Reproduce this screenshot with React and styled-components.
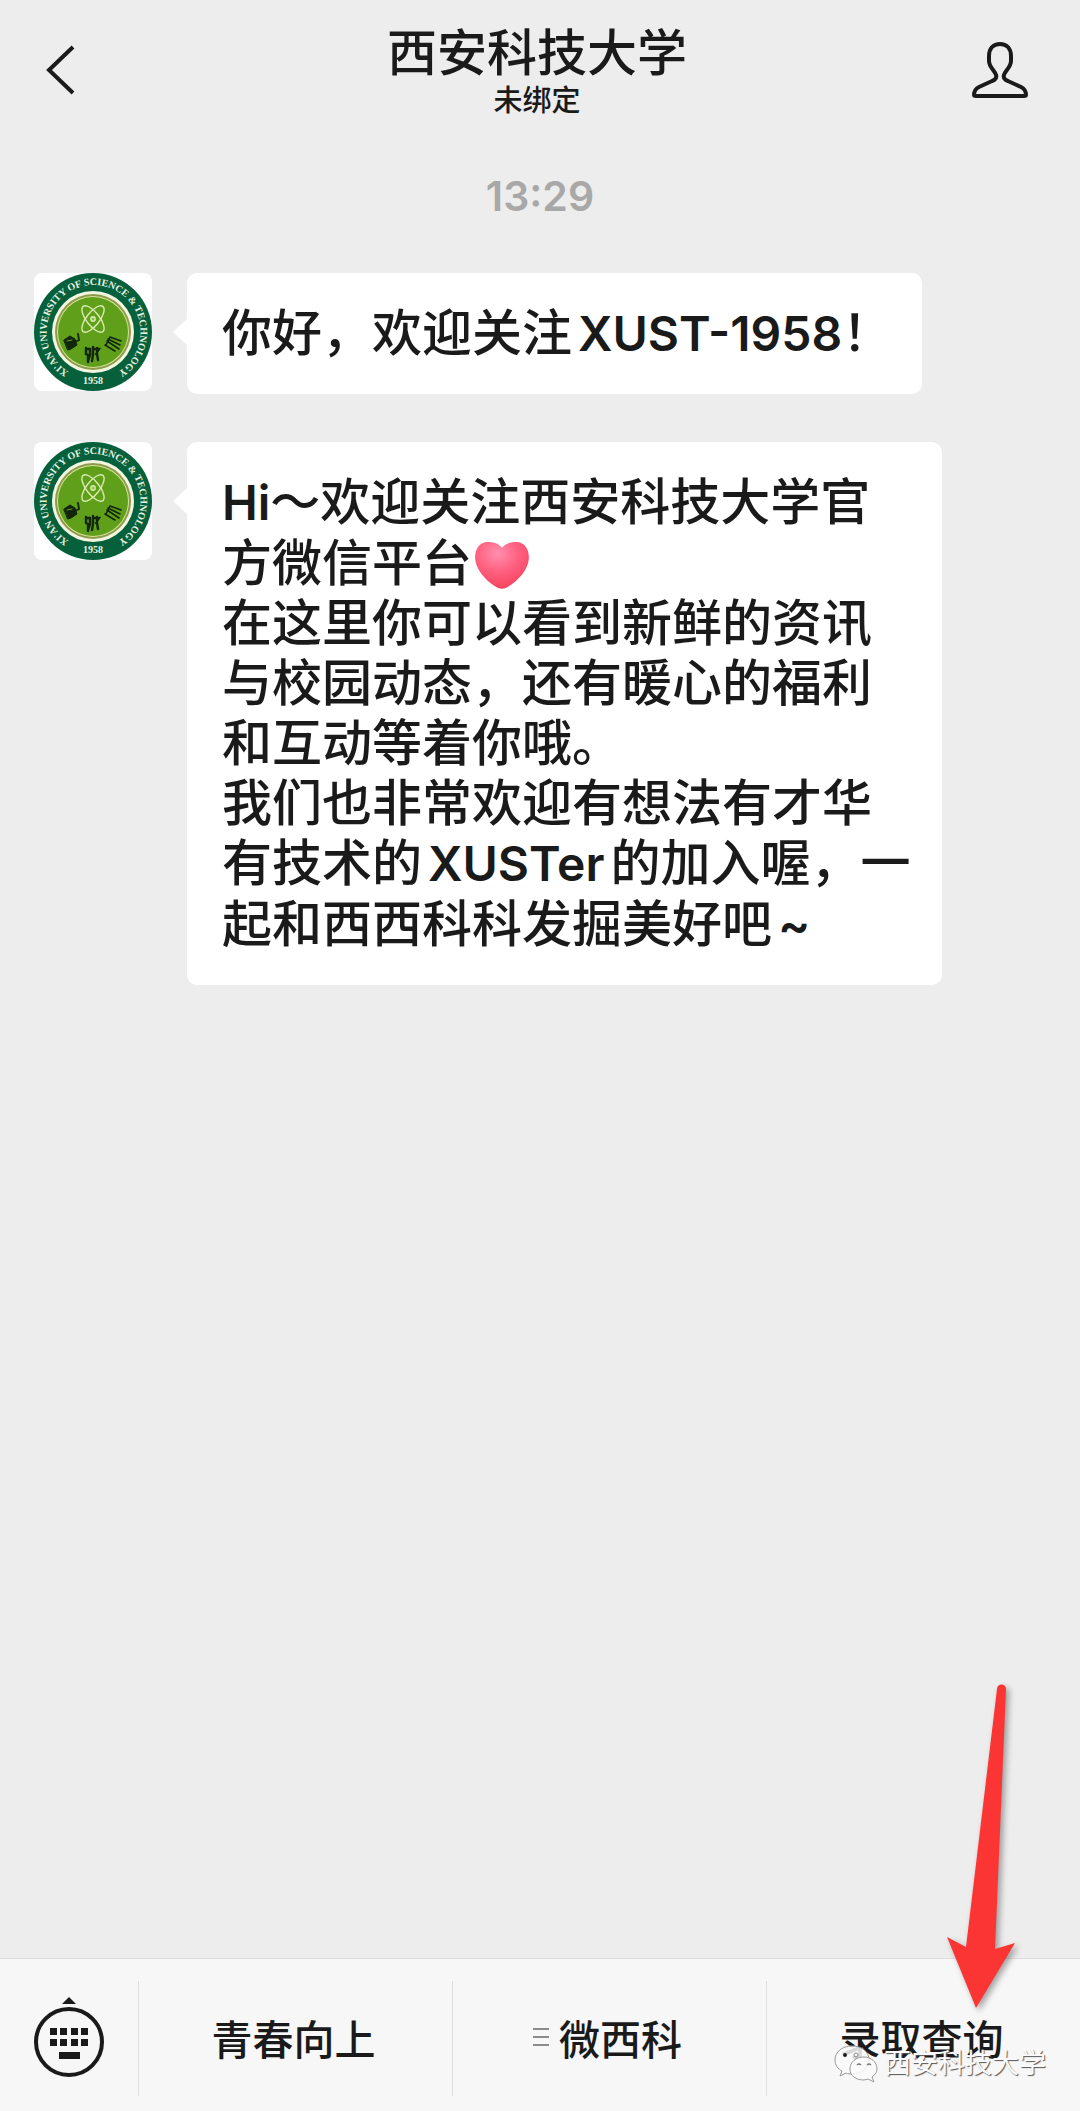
import React from "react";
import styled, { createGlobalStyle } from "styled-components";

//------------------------------------------------------------//

const MENU = [
  { label: "青春向上" },
  { label: "微西科", hasSub: true },
  { label: "录取查询", isTarget: true },
];

const Seal = () => (
  <svg viewBox="-59 -59 118 118" role="img" aria-label="西安科技大学校徽">
    <defs>
      <path id="seal-ring" d="M0 47 A47 47 0 1 1 1 47" />
    </defs>
    <circle r="59" fill="#06603c" />
    <circle r="41" fill="#f3f6df" />
    <circle r="38" fill="#8d9a4c" />
    <circle r="36" fill="#d5e29a" />
    <circle r="35" fill="#5f9f19" />
    <SEALTEXT fontSize="10" textAnchor="middle">
      <textPath href="#seal-ring" startOffset="50%">
        XI'AN UNIVERSITY OF SCIENCE &amp; TECHNOLOGY
      </textPath>
    </SEALTEXT>
    <SEALTEXT fontSize="10" textAnchor="middle" y="52">
      1958
    </SEALTEXT>
    <g fill="none" stroke="#dcebb4" strokeWidth="1.4">
      <ellipse cy="-13" rx="16" ry="6.5" transform="rotate(52 0 -13)" />
      <ellipse cy="-13" rx="16" ry="6.5" transform="rotate(-52 0 -13)" />
      <circle cy="-13" r="2.2" fill="#8fbf4a" />
    </g>
    <g fill="#12260c" stroke="#12260c" strokeLinecap="round">
      <path d="M-29 8l6-4 5 3 2 6-6 4-3 1z" strokeWidth="1" />
      <path d="M-18 10l4-2-1-6" fill="none" strokeWidth="1.8" />
      <path d="M-26 9l5-1" stroke="#5f9f19" strokeWidth="1" />
      <path
        d="M-7 16v6l2 1v7M-3 17v6l-2 6M0 15v8l-1 6M4 16v6l1 6M-7 17h4M0 17h6l-3 5"
        fill="none"
        strokeWidth="2.4"
      />
      <path
        d="M13 13l4-8M14 9l12 8M15 7l12 6M17 5l11 4M12 13l10 6"
        fill="none"
        strokeWidth="1.6"
      />
    </g>
  </svg>
);

const Heart = () => (
  <HEART viewBox="0 0 56 50" role="img" aria-label="爱心">
    <defs>
      <radialGradient id="heart-fill" cx="0.42" cy="0.25" r="0.8">
        <stop offset="0" stopColor="#ff8fae" />
        <stop offset="0.5" stopColor="#ff5f7e" />
        <stop offset="1" stopColor="#f2405c" />
      </radialGradient>
    </defs>
    <path
      d="M28 7C24 2 18 1 13 1 5 1 0 8 0 17c0 14 14 27 24 32 3 1 5 1 8 0 10-5 24-18 24-32C56 8 51 1 43 1 38 1 32 2 28 7z"
      fill="url(#heart-fill)"
    />
  </HEART>
);

const Message = ({ children }) => (
  <MESSAGE>
    <AVATAR>
      <Seal />
    </AVATAR>
    <BUBBLE>{children}</BUBBLE>
  </MESSAGE>
);

const KeyboardIcon = () => (
  <svg width="70" height="80" viewBox="0 0 70 80" aria-hidden="true">
    <path d="M35 0l7 7H28z" fill="#1a1a1a" />
    <circle
      cx="35"
      cy="45"
      r="33"
      fill="none"
      stroke="#1a1a1a"
      strokeWidth="4"
    />
    <g fill="#1a1a1a">
      {[31, 42].map((y) =>
        [16, 26, 37, 47].map((x) => (
          <rect key={`${x}-${y}`} x={x} y={y} width="7" height="7" />
        ))
      )}
      <rect x="25" y="55" width="21" height="7" />
    </g>
  </svg>
);

const Arrow = () => (
  <ARROW viewBox="0 0 76 330" aria-hidden="true">
    <path
      d="M53 8a4 4 0 0 1 9 0L51 268l20-6-39 65L3 256l19 10z"
      fill="#fa3534"
    />
  </ARROW>
);

const Watermark = () => (
  <WATERMARK>
    <svg width="44" height="38" viewBox="0 0 44 38" aria-hidden="true">
      <g fill="#fafafa" fillOpacity="0.85" stroke="#9a9a9a">
        <path d="M18 1C8 1 1 7 1 15c0 5 3 9 7 11l-2 5 6-3c2 1 4 1 6 1 9 0 17-6 17-14S28 1 18 1z" />
        <path d="M30 12c-8 0-14 5-14 12s6 11 14 11l4-1 6 3-2-5c3-2 5-5 5-8 0-7-6-12-13-12z" />
      </g>
      <circle cx="11" cy="10" r="2" fill="#1f1f1f" />
      <circle cx="22" cy="10" r="2" fill="none" stroke="#8a8a8a" />
      <path
        d="M23 20q2-2 4 0M33 20q2-2 4 0"
        fill="none"
        stroke="#777"
        strokeWidth="1.4"
      />
    </svg>
    <span>西安科技大学</span>
  </WATERMARK>
);

const App = () => {
  return (
    <PAGE>
      <GlobalStyle />
      <HEADER>
        <ICONBUTTON aria-label="返回">
          <svg width="30" height="54" viewBox="0 0 30 54">
            <path
              d="M27 4L3 27l24 23"
              fill="none"
              stroke="#1a1a1a"
              strokeWidth="4"
            />
          </svg>
        </ICONBUTTON>
        <TITLES>
          <TITLE>西安科技大学</TITLE>
          <SUBTITLE>未绑定</SUBTITLE>
        </TITLES>
        <ICONBUTTON aria-label="公众号资料">
          <svg width="56" height="56" viewBox="0 0 56 56">
            <path
              d="M28 2C21 2 17 7 17 14v5c0 6 6 10 7 14 1 3-1 5-4 6L7 45c-4 2-5 4-5 8 0 1 0 1 2 1h48c2 0 2 0 2-1 0-4-1-6-5-8l-13-6c-3-1-5-3-4-6 1-4 7-8 7-14v-5C39 7 35 2 28 2z"
              fill="none"
              stroke="#1a1a1a"
              strokeWidth="4"
            />
          </svg>
        </ICONBUTTON>
      </HEADER>

      <CHAT>
        <TIME>13:29</TIME>
        <Message>
          <p>
            你好，欢迎关注<LATIN $before>XUST-1958</LATIN>！
          </p>
        </Message>
        <Message>
          <p>
            <LATIN>Hi</LATIN>～欢迎关注西安科技大学官方微信平台
            <Heart />
          </p>
          <p>在这里你可以看到新鲜的资讯与校园动态，还有暖心的福利和互动等着你哦。</p>
          <p>
            我们也非常欢迎有想法有才华有技术的
            <LATIN $before $after>
              XUSTer
            </LATIN>
            的加入喔，一起和西西科科发掘美好吧<LATIN $before>~</LATIN>
          </p>
        </Message>
      </CHAT>

      <FOOTER>
        <KEYBOARD aria-label="切换键盘">
          <KeyboardIcon />
        </KEYBOARD>
        {MENU.map(({ label, hasSub, isTarget }) => (
          <CELL key={label}>
            <MENUBUTTON>
              {hasSub && (
                <svg width="16" height="20" viewBox="0 0 16 20">
                  <path d="M0 2h16M0 10h16M0 18h16" stroke="#8c8c8c" strokeWidth="2" />
                </svg>
              )}
              {label}
            </MENUBUTTON>
            {isTarget && <Arrow />}
            {isTarget && <Watermark />}
          </CELL>
        ))}
      </FOOTER>
    </PAGE>
  );
};

/*-----------------------*\
            CSS
\*-----------------------*/

const GlobalStyle = createGlobalStyle`
  * {
    box-sizing: border-box;
  }

  body {
    margin: 0;
    background: #ededed;
    color: #1a1a1a;
    font-family: Inter, "Noto Sans CJK SC", sans-serif;
    font-weight: 500;
  }

  h1, p {
    margin: 0;
    font-weight: inherit;
  }

  button {
    border: 0;
    padding: 0;
    background: none;
    color: inherit;
    font: inherit;
    cursor: pointer;
  }
`;

const PAGE = styled.div`
  display: flex;
  flex-direction: column;
  min-height: 100vh;
`;

const HEADER = styled.header`
  display: flex;
  justify-content: space-between;
  align-items: center;
  height: 140px;
  padding: 0 52px 0 46px;
`;

const ICONBUTTON = styled.button`
  display: flex;
  width: 56px;
`;

const TITLES = styled.div`
  padding-top: 2px;
  text-align: center;
`;

const TITLE = styled.h1`
  font-size: 50px;
  line-height: 60px;
`;

const SUBTITLE = styled.p`
  font-size: 29px;
  line-height: 36px;
`;

const CHAT = styled.main`
  flex: 1;
  display: flex;
  flex-direction: column;
  gap: 48px;
  padding: 0 34px;
`;

const TIME = styled.time`
  padding: 32px 0 4px;
  color: #a8a8a8;
  font-size: 41px;
  font-weight: 600;
  line-height: 49px;
  text-align: center;
`;

const MESSAGE = styled.article`
  display: flex;
  align-items: flex-start;
  gap: 35px;
`;

const AVATAR = styled.div`
  flex: none;
  width: 118px;
  height: 118px;
  overflow: hidden;
  border-radius: 8px;
  background: #fff;

  svg {
    display: block;
  }
`;

const SEALTEXT = styled.text`
  fill: #e4f3e0;
  font-family: "Liberation Serif", serif;
  font-weight: 700;
`;

const BUBBLE = styled.div`
  position: relative;
  max-width: 755px;
  padding: 30px 30px 30px 35px;
  border-radius: 10px;
  background: #fff;
  font-size: 50px;
  line-height: 60px;
  text-spacing-trim: space-all;

  /* tail */
  &::before {
    content: "";
    position: absolute;
    top: 46px;
    left: -14px;
    border: solid transparent;
    border-width: 13px 14px 13px 0;
    border-right-color: #fff;
  }
`;

const LATIN = styled.span`
  margin-left: ${({ $before }) => ($before ? "6px" : 0)};
  margin-right: ${({ $after }) => ($after ? "6px" : 0)};
  font-size: 48px;
  font-weight: 600;
`;

const HEART = styled.svg`
  width: 56px;
  height: 48px;
  margin-left: 2px;
  vertical-align: -8px;
`;

const FOOTER = styled.footer`
  display: flex;
  height: 153px;
  padding: 22px 0 15px;
  border-top: 1px solid #dedede;
  background: #f7f7f7;
`;

const KEYBOARD = styled.button`
  display: flex;
  justify-content: center;
  align-items: center;
  width: 138px;
  padding-bottom: 4px;
`;

const CELL = styled.div`
  position: relative;
  flex: 1;
  display: flex;
  border-left: 1px solid #dedede;
`;

const MENUBUTTON = styled.button`
  flex: 1;
  display: flex;
  justify-content: center;
  align-items: center;
  gap: 10px;
  padding: 0 4px 4px 0;
  font-size: 41px;
`;

const ARROW = styled.svg`
  position: absolute;
  right: 60px;
  bottom: 85px;
  width: 76px;
  height: 330px;
  pointer-events: none;
  filter: drop-shadow(3px 3px 3px rgba(0, 0, 0, 0.35));
`;

const WATERMARK = styled.div`
  position: absolute;
  right: 34px;
  bottom: 12px;
  display: flex;
  align-items: center;
  gap: 6px;
  color: #fafafa;
  font-size: 27px;
  font-weight: 400;
  line-height: 40px;
  white-space: nowrap;
  text-shadow: 1px 1px 1px #555;
  pointer-events: none;
`;

export default App;
